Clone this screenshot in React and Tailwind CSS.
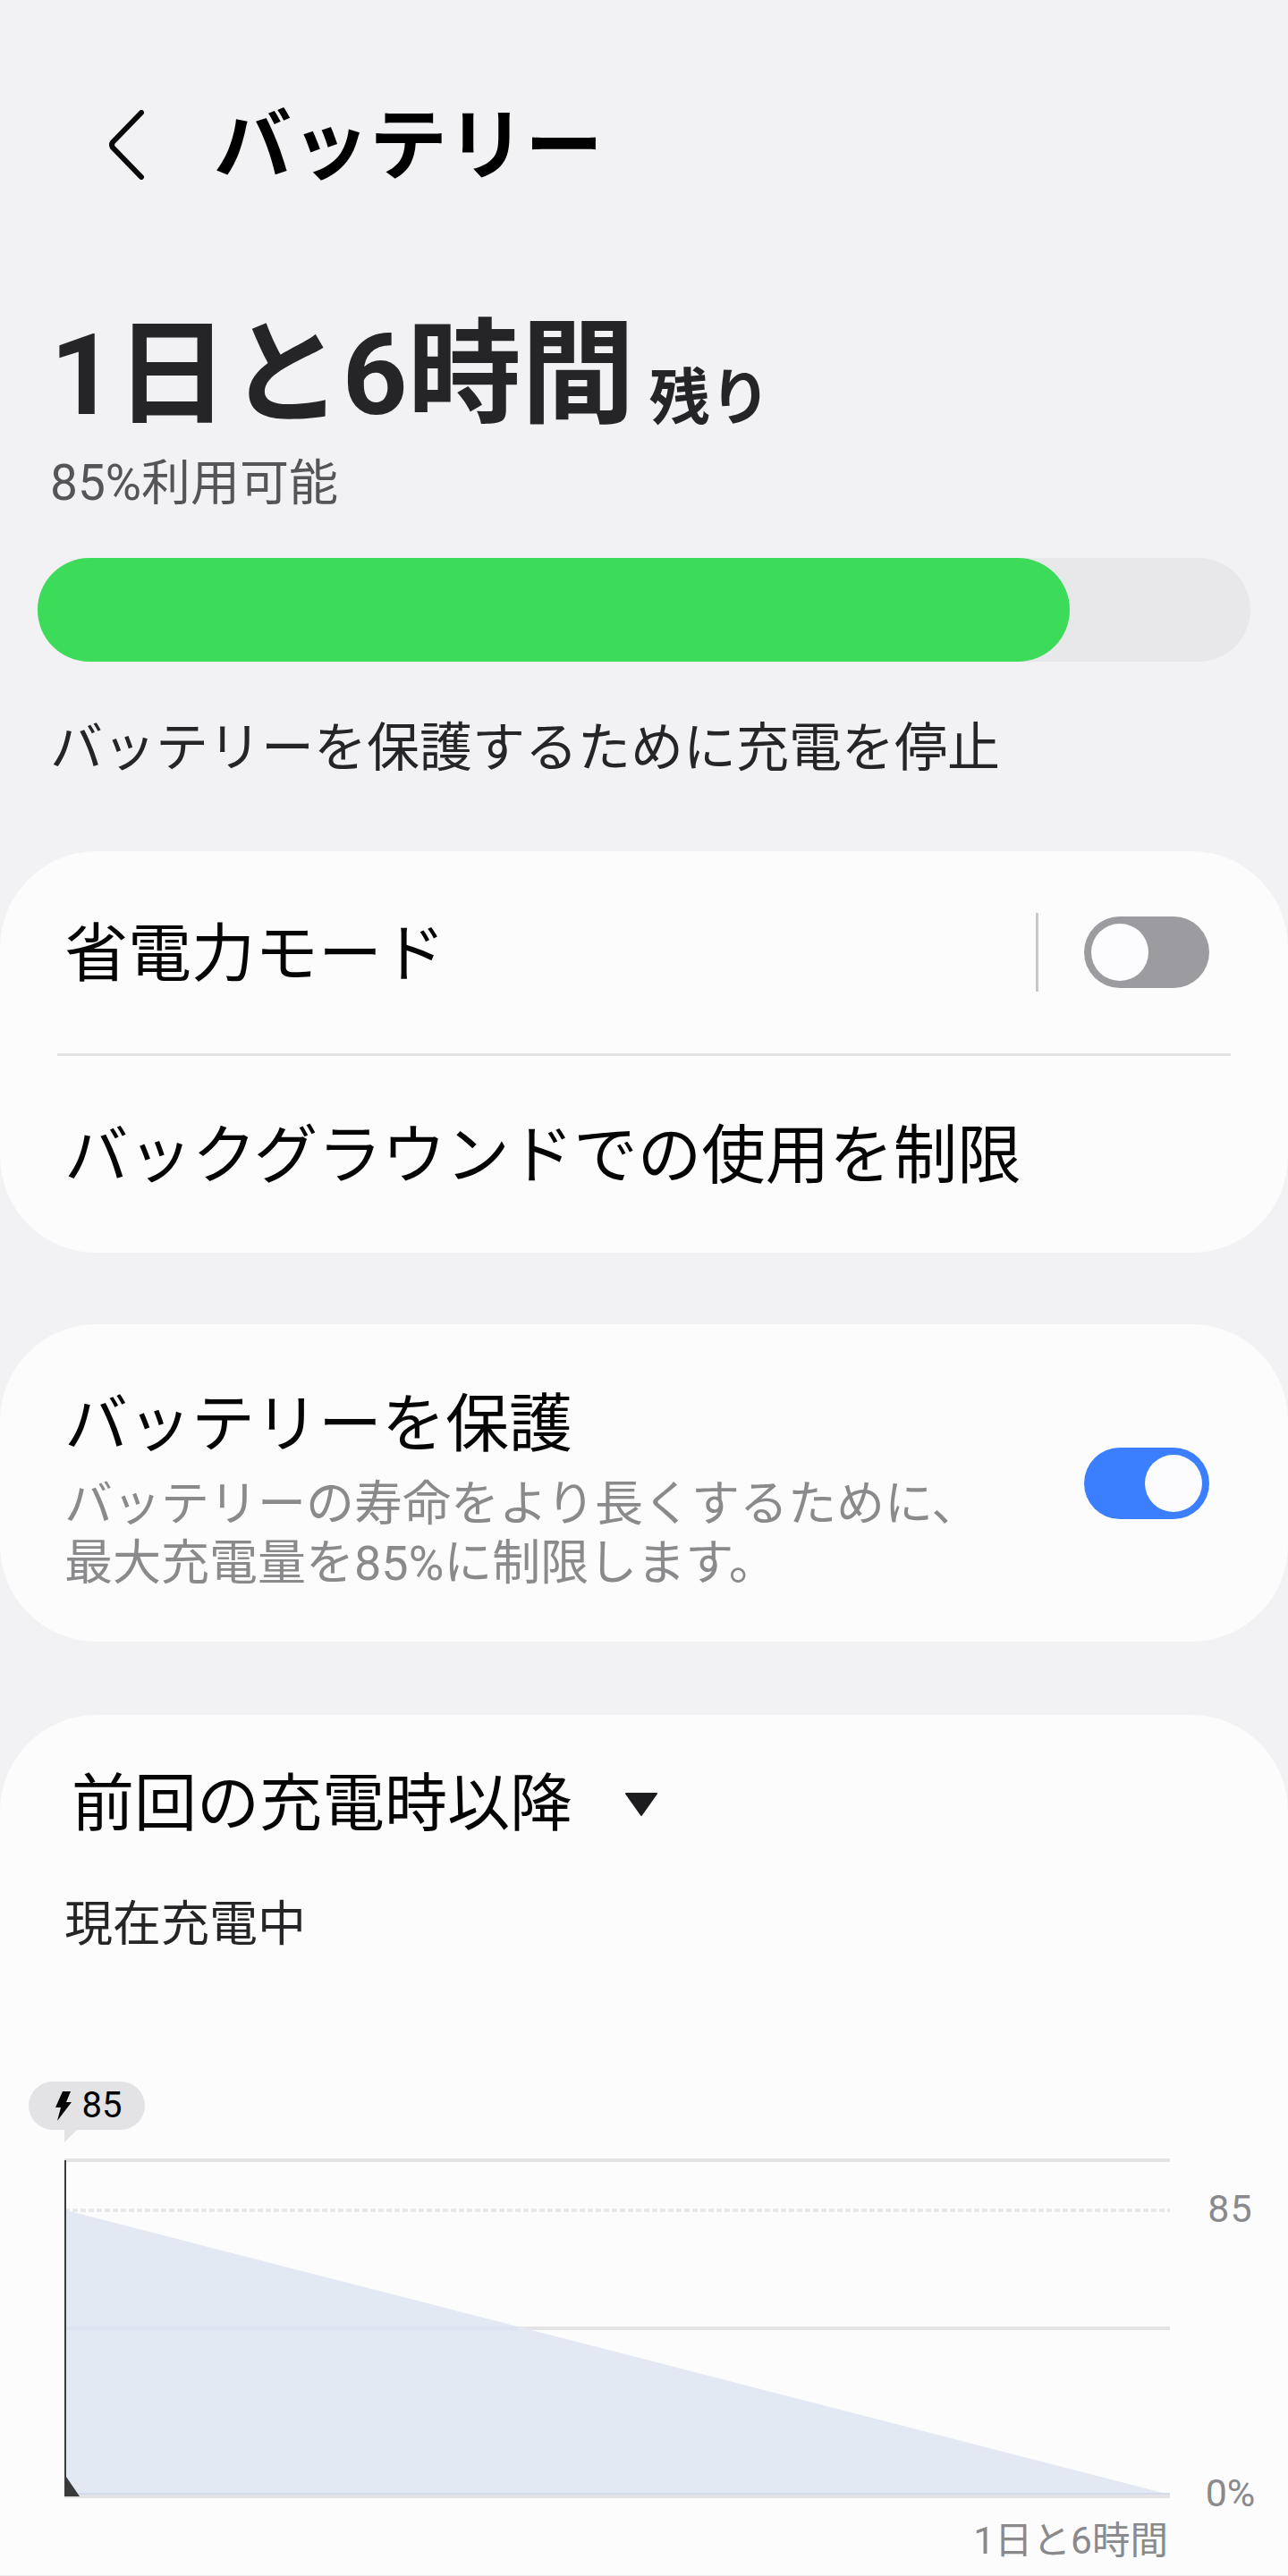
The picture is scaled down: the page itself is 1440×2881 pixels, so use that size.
const Toggle = ({ on }) => (
  <div
    className={`flex h-[80px] w-[140px] shrink-0 items-center rounded-full px-[8px] ${
      on ? "justify-end bg-[#3b7ffe]" : "justify-start bg-[#9c9ca0]"
    }`}
  >
    <div className="h-[64px] w-[64px] rounded-full bg-[#fcfcfe]" />
  </div>
);

const Chart = () => (
  <svg width="1236" height="380" viewBox="0 0 1236 380" className="block shrink-0">
    <rect x="0" y="0" width="1236" height="4" fill="#e3e3e5" />
    <line x1="0" y1="58" x2="1236" y2="58" stroke="#e8e8ea" strokeWidth="4" strokeDasharray="6 3" />
    <rect x="0" y="188" width="1236" height="4" fill="#e3e3e5" />
    <rect x="0" y="376" width="1236" height="4" fill="#e3e3e5" />
    <polygon points="2,58 1236,376 2,376" fill="#e2e9f3" />
    <rect x="2" y="188" width="505" height="4" fill="#dce3ee" />
    <rect x="2" y="374" width="1234" height="2" fill="#d3dbe8" />
    <rect x="0" y="2" width="2" height="376" fill="#3a3a3c" />
    <polygon points="0,356 2,356 17,378 0,378" fill="#3a3a3c" />
  </svg>
);

export default function App() {
  return (
    <div className="h-[2881px] overflow-hidden bg-[#f2f2f4] text-[#050505] [font-family:Roboto,'Noto_Sans_CJK_JP',sans-serif]">
      <header className="flex h-[324px] items-center pl-[119px]">
        <svg width="46" height="78" viewBox="0 0 46 78" fill="none" className="shrink-0">
          <path
            d="M39 3 L7 36 Q5 39 7 42 L39 75"
            stroke="#0a0a0a"
            strokeWidth="6"
            strokeLinecap="round"
            strokeLinejoin="round"
          />
        </svg>
        <h1 className="mt-[4px] ml-[74px] text-[87px] leading-none font-bold text-black">バッテリー</h1>
      </header>

      <section className="px-[56px] pt-[26px] text-[#252527]">
        <div className="flex h-[140px] items-end">
          <span className="text-[127px] leading-[140px] font-bold">1日と6時間</span>
          <span className="ml-[16px] pb-[8px] text-[68px] leading-[72px] font-bold">残り</span>
        </div>
        <p className="mt-[20px] text-[55px] leading-[60px] text-[#555557]">85%利用可能</p>
      </section>

      <div className="mx-[42px] mt-[54px] h-[116px] rounded-full bg-[#e8e8ea]">
        <div className="h-full w-[1154px] rounded-full bg-[#3ddb5a]" />
      </div>

      <p className="mt-[62px] mb-[-2px] px-[56px] text-[59px] leading-[70px] text-[#252527]">
        バッテリーを保護するために充電を停止
      </p>

      <section className="mt-[82px] h-[449px] rounded-[108px] bg-[#fcfcfc]">
        <div className="flex h-[226px] items-center pl-[72px] pr-[88px]">
          <span className="pt-[3px] text-[71px] leading-[84px]">省電力モード</span>
          <div className="ml-auto h-[88px] w-[3px] bg-[#c8c8c8]" />
          <div className="ml-[51px]">
            <Toggle />
          </div>
        </div>
        <div className="mx-[64px] h-[3px] bg-[#e4e4e6]" />
        <div className="flex h-[220px] items-center pl-[72px]">
          <span className="pt-[3px] text-[71.5px] leading-[84px]">バックグラウンドでの使用を制限</span>
        </div>
      </section>

      <section className="mt-[80px] flex h-[355px] items-center justify-between rounded-[108px] bg-[#fcfcfc] pl-[72px] pr-[88px]">
        <div className="self-start pt-[70px]">
          <div className="text-[71px] leading-[84px]">バッテリーを保護</div>
          <p className="mt-[15px] text-[54px] leading-[66px] text-[#8a8a8c]">
            バッテリーの寿命をより長くするために、
            <br />
            最大充電量を85%に制限します。
          </p>
        </div>
        <Toggle on />
      </section>

      <section className="mt-[82px] h-[963px] rounded-t-[108px] border-b border-[#ececee] bg-[#fcfcfc]">
        <div className="flex items-center pt-[58px] pl-[80px]">
          <span className="text-[70px] leading-[84px]">前回の充電時以降</span>
          <svg width="38" height="26" viewBox="0 0 38 26" className="ml-[58px] shrink-0">
            <polygon points="2,1 36,1 19,25" fill="#1c1c1e" stroke="#1c1c1e" strokeWidth="2" strokeLinejoin="round" />
          </svg>
        </div>
        <p className="mt-[61px] pl-[72px] text-[54px] leading-[64px] text-[#252527]">現在充電中</p>

        <div className="mt-[143px] ml-[32px] flex h-[54px] w-[130px] items-center justify-center gap-[12px] rounded-full bg-[#e3e3e5]">
          <svg width="18" height="33" viewBox="0 0 18 33" className="ml-[4px] shrink-0">
            <polygon points="8,0 17,0 12,12 18,12 2,33 6,18 0,18" fill="#050505" />
          </svg>
          <span className="text-[40px] leading-none text-black">85</span>
        </div>
        <svg width="16" height="14" viewBox="0 0 16 14" className="ml-[72px] block">
          <polygon points="0,0 14,0 0,14" fill="#e3e3e5" />
        </svg>

        <div className="mt-[18px] flex pl-[72px]">
          <Chart />
          <div className="flex h-[418px] w-[132px] flex-col items-center pl-[3px] pt-[31px] text-[#8a8a8c]">
            <span className="text-[43px] leading-[50px] tracking-[1px]">85</span>
            <span className="mt-[268px] text-[43px] leading-[50px]">0%</span>
          </div>
        </div>
        <p className="mt-[-15px] w-[1306px] text-right text-[42.5px] leading-[50px] text-[#8a8a8c]">1日と6時間</p>
      </section>
    </div>
  );
}
